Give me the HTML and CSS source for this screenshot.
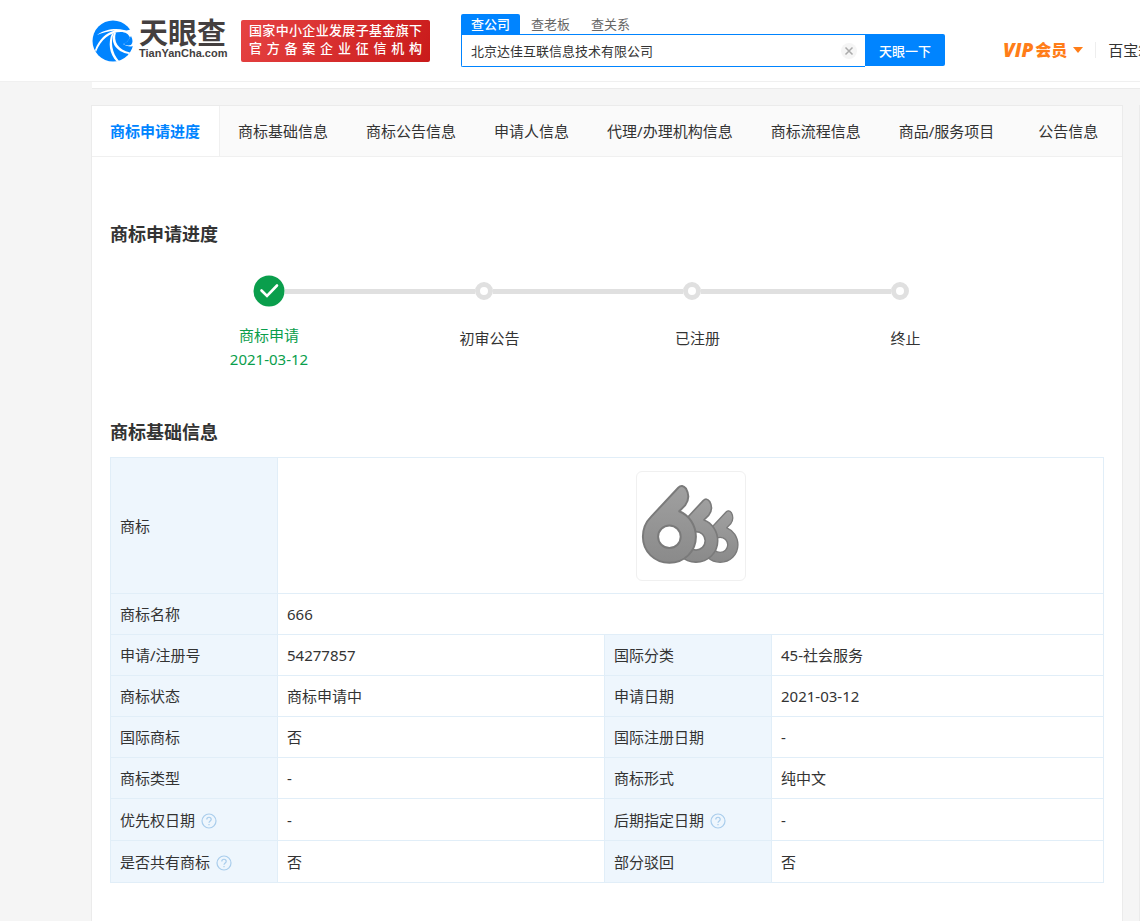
FILE: index.html
```html
<!DOCTYPE html>
<html lang="zh-CN">
<head>
    <meta charset="UTF-8">
    <meta name="viewport" content="width=device-width, initial-scale=1.0">
    <title>商标详情 - 天眼查</title>
    <link rel="stylesheet" href="styles.css">
</head>
<body>

    <header class="header">
        <a class="logo" href="#">
            <svg class="logo-mark" viewBox="0 0 42 42" aria-hidden="true">
                <circle cx="21" cy="21" r="20.5" fill="#0084ff"/>
                <path d="M5 15C13 9 24 8 32 10C35 11 37 10 39 9L42 14V19L38 18C37 14 33 12 29 12C18 12 9 19 4 32L3 30C7 19 14 13 23 10.500C16 11 10 13 5 15Z" fill="#fff"/>
                <path d="M38 18C36 21 33 24 31 24C34 26 38 27 42 26V18Z" fill="#fff"/>
                <path d="M39 16C41 20 41 23 39 25C36 26 33 25 31 24C34 23 37 20 39 16Z" fill="#0084ff"/>
                <path d="M22 13C18 21 20 33 27 41L25 42C17 34 16 22 20 13.500Z" fill="#fff"/>
                <path d="M24 12.500C21 21 26 30 38 32.500L37 34C24 32 18 22 22 13Z" fill="#fff"/>
            </svg>
            <span class="logo-words">
                <span class="logo-name">天眼查</span>
                <span class="logo-domain">TianYanCha.com</span>
            </span>
        </a>

        <div class="slogan">
            <div>国家中小企业发展子基金旗下</div>
            <div>官 方 备 案 企 业 征 信 机 构</div>
        </div>

        <form class="search">
            <div class="search-types">
                <a class="search-type active" href="#">查公司</a>
                <a class="search-type" href="#">查老板</a>
                <a class="search-type" href="#">查关系</a>
            </div>
            <div class="search-row">
                <div class="search-box">
                    <input class="search-input" type="text" aria-label="搜索" value="北京达佳互联信息技术有限公司">
                    <button class="search-clear" type="button" aria-label="清空">
                        <svg viewBox="0 0 16 16"><circle cx="8" cy="8" r="8" fill="#f5f5f5"/><path d="M4.500 4.500L11.500 11.500M11.500 4.500L4.500 11.500" stroke="#aaa" stroke-width="1.500"/></svg>
                    </button>
                </div>
                <button class="search-button" type="button">天眼一下</button>
            </div>
        </form>

        <nav class="header-nav">
            <a class="vip" href="#"><em>VIP</em>会员<span class="caret"></span></a>
            <a class="toolbox" href="#">百宝箱</a>
        </nav>
    </header>

    <div class="strip"></div>

    <div class="page">
        <main class="card">
            <nav class="tabs">
                <a class="tab active" href="#progress">商标申请进度</a>
                <a class="tab" href="#base">商标基础信息</a>
                <a class="tab" href="#">商标公告信息</a>
                <a class="tab" href="#">申请人信息</a>
                <a class="tab" href="#">代理/办理机构信息</a>
                <a class="tab" href="#">商标流程信息</a>
                <a class="tab" href="#">商品/服务项目</a>
                <a class="tab" href="#">公告信息</a>
            </nav>

            <!-- Progress -->
            <section class="progress" id="progress">
                <h2>商标申请进度</h2>
                <ol class="steps">
                    <li class="step done">
                        <div class="step-line">
                            <svg class="step-check" viewBox="0 0 32 32" aria-hidden="true"><circle cx="16" cy="16" r="15.500" fill="#0a9e4c"/><path d="M8.500 15.500L14 21L24 10.500" fill="none" stroke="#fff" stroke-width="2.600" stroke-linecap="round"/></svg>
                        </div>
                        <div class="step-label">商标申请<br>2021-03-12</div>
                    </li>
                    <li class="step">
                        <div class="step-line"><span class="step-dot"></span></div>
                        <div class="step-label">初审公告</div>
                    </li>
                    <li class="step">
                        <div class="step-line"><span class="step-dot"></span></div>
                        <div class="step-label">已注册</div>
                    </li>
                    <li class="step">
                        <div class="step-line"><span class="step-dot"></span></div>
                        <div class="step-label">终止</div>
                    </li>
                </ol>
            </section>

            <!-- Basic info -->
            <section class="base" id="base">
                <h2>商标基础信息</h2>
                <table class="info">
                    <colgroup>
                        <col class="col-name">
                        <col class="col-value">
                        <col class="col-name">
                        <col>
                    </colgroup>
                    <tr class="row-image">
                        <th>商标</th>
                        <td colspan="3">
                            <div class="mark">
                                <svg viewBox="0 0 110 110" role="img" aria-label="666">
                                    <defs>
                                        <linearGradient id="gray" x1="0" y1="0" x2="0" y2="1">
                                            <stop offset="0" stop-color="#a0a0a0"/>
                                            <stop offset="1" stop-color="#8a8a8a"/>
                                        </linearGradient>
                                        <path id="six" fill-rule="evenodd" d="M42 16Q46 12 50 17Q55 26 49 34L43 40C53 44 60 54 60 66C60 81 48 92.500 33 92.500C18 92.500 6 81 6 66C6 58 9 51 14 46ZM33 54.500A11.500 11.500 0 1 0 33 77.500A11.500 11.500 0 1 0 33 54.500Z"/>
                                    </defs>
                                    <g fill="url(#gray)" stroke="#7a7a7a" stroke-width="2" stroke-linejoin="round">
                                        <use href="#six" transform="translate(62.600 30) scale(.67)"/>
                                        <circle cx="60" cy="70" r="12" fill="#fff" stroke="none"/>
                                        <use href="#six" transform="translate(33 16) scale(.82)"/>
                                        <circle cx="33" cy="66" r="14" fill="#fff" stroke="none"/>
                                        <use href="#six"/>
                                    </g>
                                </svg>
                            </div>
                        </td>
                    </tr>
                    <tr>
                        <th>商标名称</th>
                        <td colspan="3">666</td>
                    </tr>
                    <tr>
                        <th>申请/注册号</th>
                        <td>54277857</td>
                        <th>国际分类</th>
                        <td>45-社会服务</td>
                    </tr>
                    <tr>
                        <th>商标状态</th>
                        <td>商标申请中</td>
                        <th>申请日期</th>
                        <td>2021-03-12</td>
                    </tr>
                    <tr>
                        <th>国际商标</th>
                        <td>否</td>
                        <th>国际注册日期</th>
                        <td>-</td>
                    </tr>
                    <tr>
                        <th>商标类型</th>
                        <td>-</td>
                        <th>商标形式</th>
                        <td>纯中文</td>
                    </tr>
                    <tr class="row-help">
                        <th>优先权日期<svg class="help" viewBox="0 0 16 16" aria-hidden="true"><circle cx="8" cy="8" r="7"/><path d="M5.800 6.400C5.800 3.500 10.200 3.500 10.200 6.400C10.200 7.900 8 8 8 9.800M8 11V12.200"/></svg></th>
                        <td>-</td>
                        <th>后期指定日期<svg class="help" viewBox="0 0 16 16" aria-hidden="true"><circle cx="8" cy="8" r="7"/><path d="M5.800 6.400C5.800 3.500 10.200 3.500 10.200 6.400C10.200 7.900 8 8 8 9.800M8 11V12.200"/></svg></th>
                        <td>-</td>
                    </tr>
                    <tr class="row-help">
                        <th>是否共有商标<svg class="help" viewBox="0 0 16 16" aria-hidden="true"><circle cx="8" cy="8" r="7"/><path d="M5.800 6.400C5.800 3.500 10.200 3.500 10.200 6.400C10.200 7.900 8 8 8 9.800M8 11V12.200"/></svg></th>
                        <td>否</td>
                        <th>部分驳回</th>
                        <td>否</td>
                    </tr>
                </table>
            </section>
        </main>
        <aside class="side"></aside>
    </div>

</body>
</html>
```

FILE: styles.css
```css
* {
    box-sizing: border-box;
}

body {
    margin: 0;
    font-family: "Noto Sans", "Noto Sans CJK SC", sans-serif;
    font-size: 15px;
    line-height: 24px;
    color: #333;
    background-color: #f5f5f5;
    overflow-x: hidden;
}

a {
    color: inherit;
    text-decoration: none;
}

button {
    font-family: inherit;
    border: none;
    padding: 0;
    cursor: pointer;
}

h2 {
    margin: 0;
    font-size: 18px;
    line-height: 24px;
}

/* Header */
.header {
    display: flex;
    align-items: flex-start;
    height: 82px;
    padding-left: 92px;
    background-color: #fff;
    border-bottom: 1px solid #f0f0f0;
    overflow: hidden;
}

.logo {
    display: flex;
    flex: none;
    width: 149px;
    padding-top: 20px;
}

.logo-mark {
    width: 42px;
    height: 42px;
    margin-right: 5px;
}

.logo-words {
    display: flex;
    flex-direction: column;
    color: #443f3f;
    font-weight: bold;
}

.logo-name {
    font-size: 29px;
    line-height: 26px;
}

.logo-domain {
    font-family: "Liberation Sans", Arial, sans-serif;
    font-size: 11px;
    line-height: 14px;
}

.slogan {
    flex: none;
    width: 189px;
    height: 42px;
    margin: 20px 31px 0 0;
    padding: 1px 8px;
    border-radius: 2px;
    background: linear-gradient(120deg, #e64343, #c91a1a);
    color: #fff;
    font-size: 13px;
    line-height: 18px;
    font-weight: 500;
    text-align-last: justify;
}

.search {
    flex: none;
    width: 484px;
    padding-top: 14px;
    font-size: 13px;
}

.search-types {
    display: flex;
    gap: 1px;
    line-height: 20px;
    color: #666;
}

.search-type {
    padding: 0 10px;
}

.search-type.active {
    border-radius: 2px 2px 0 0;
    background-color: #0084ff;
    color: #fff;
    font-weight: 500;
}

.search-row {
    display: flex;
}

.search-box {
    display: flex;
    flex: 1;
    align-items: center;
    height: 33px;
    padding-right: 8px;
    border: 1px solid #0084ff;
    border-right: none;
    border-radius: 0 0 0 2px;
}

.search-input {
    flex: 1;
    min-width: 0;
    padding: 0 9px;
    border: none;
    outline: none;
    background: none;
    color: #333;
    font-family: inherit;
    font-size: 13px;
    line-height: 20px;
}

.search-clear {
    width: 16px;
    height: 16px;
    background: none;
}

.search-clear svg {
    display: block;
}

.search-button {
    width: 80px;
    height: 32px;
    border-radius: 0 2px 2px 0;
    background-color: #0084ff;
    color: #fff;
    font-size: 13px;
    font-weight: 500;
}

.header-nav {
    display: flex;
    flex: none;
    align-items: center;
    padding: 38px 0 0 58px;
    white-space: nowrap;
}

.vip {
    display: flex;
    align-items: center;
    color: #ff7d18;
    font-size: 16px;
    font-weight: 900;
}

.vip em {
    margin-right: 2px;
    font-family: "Open Sans", sans-serif;
    font-size: 19px;
    font-weight: 800;
}

.caret {
    margin-left: 6px;
    border: 5px solid transparent;
    border-top: 6px solid #ff7d18;
    border-bottom: none;
}

.toolbox {
    margin-left: 12px;
    padding-left: 12px;
    border-left: 1px solid #eee;
    line-height: 16px;
}

.strip {
    height: 7px;
    margin-left: 92px;
    background-color: #fff;
    border-bottom: 1px solid #ebebeb;
}

/* Card */
.page {
    display: flex;
    gap: 16px;
    padding: 16px 0 0 91px;
}

.card {
    flex: 1;
    min-width: 0;
    min-height: 820px;
    border: 1px solid #ebebeb;
    background-color: #fff;
}

.side {
    width: 1px;
    background-color: #ebebeb;
}

.tabs {
    display: flex;
    height: 51px;
    border-bottom: 1px solid #f0f0f0;
    background-color: #fafafa;
    line-height: 50px;
    white-space: nowrap;
}

.tab {
    padding: 0 20px 0 18px;
}

.tab:last-child {
    flex: 1;
    padding: 0;
    text-align: center;
}

.tab.active {
    padding-right: 19px;
    background-color: #fff;
    border-right: 1px solid #f0f0f0;
    color: #0084ff;
    font-weight: bold;
}

/* Progress */
.progress {
    padding: 65px 18px 0;
}

.steps {
    display: grid;
    grid-template-columns: 222fr 208fr 208fr 208fr;
    margin: 29px 100px 0 48px;
    padding: 0;
    list-style: none;
    text-align: center;
}

.step-line {
    display: flex;
    align-items: center;
    height: 32px;
}

.step-line::before,
.step-line::after {
    content: "";
    flex: 1;
    height: 5px;
    background-color: #e0e0e0;
}

.step:first-child .step-line::before,
.step:last-child .step-line::after {
    background: none;
}

.step-check {
    width: 32px;
    height: 32px;
}

.step-dot {
    width: 18px;
    height: 18px;
    border: 5px solid #e0e0e0;
    border-radius: 50%;
}

.step-label {
    padding: 19px 0 0 11px;
}

.step.done .step-label {
    padding: 16px 0 0;
    color: #0a9e4c;
}

/* Basic info */
.base {
    padding: 49px 18px 0;
}

.info {
    width: 100%;
    margin-top: 13px;
    border-collapse: collapse;
    table-layout: fixed;
}

.col-name {
    width: 167px;
}

.col-value {
    width: 327px;
}

.info tr {
    height: 41px;
}

.info th,
.info td {
    padding: 0 9px;
    border: 1px solid #e1eef8;
    text-align: left;
    font-weight: normal;
}

.info th {
    background-color: #eef6fd;
}

.info .row-image {
    height: 136px;
}

.info .row-help {
    height: 42px;
}

.mark {
    width: 110px;
    height: 110px;
    margin: 0 auto;
    border: 1px solid #f0f0f0;
    border-radius: 6px;
}

.mark svg {
    display: block;
}

.help {
    width: 16px;
    height: 16px;
    margin-left: 6px;
    vertical-align: -3px;
    fill: none;
    stroke: #a9cdec;
    stroke-width: 1.2;
}
```
